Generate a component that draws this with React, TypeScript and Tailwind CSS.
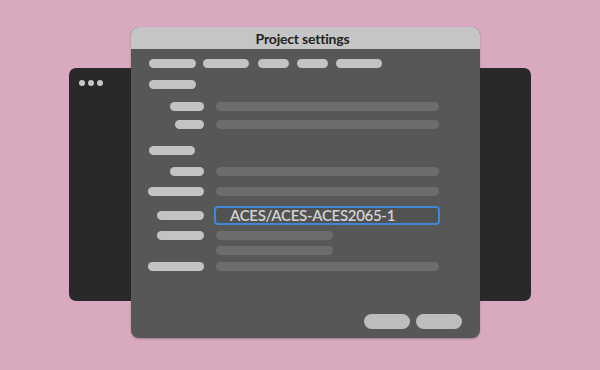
const PILL = "h-[9px] rounded-full bg-[#c3c3c3]";
const BAR = "h-[9px] rounded-full bg-[#6c6c6c]";

function Row({
  label,
  labelW,
  bar,
  className = "",
}: {
  label: number;
  labelW?: "right" | "left";
  bar?: number;
  className?: string;
}) {
  return (
    <div className={`flex items-center ${className}`}>
      <div className={`flex w-[56px] ${labelW === "left" ? "justify-start" : "justify-end"}`}>
        <div className={PILL} style={{ width: label }} />
      </div>
      {bar ? <div className={`${BAR} ml-[12px]`} style={{ width: bar }} /> : null}
    </div>
  );
}

export default function App() {
  return (
    <div
      className="relative w-[600px] h-[370px] bg-[#d8a9bf] pl-[69px] pt-[68px]"
      style={{ fontFamily: "Lato, 'Open Sans', sans-serif" }}
    >
      {/* fenêtre arrière */}
      <div className="w-[462px] h-[233px] rounded-[7px] bg-[#292929] px-[10px] py-[12px]">
        <div className="flex gap-[3px]">
          <span className="w-[6px] h-[6px] rounded-full bg-[#c8c8c8]" />
          <span className="w-[6px] h-[6px] rounded-full bg-[#c8c8c8]" />
          <span className="w-[6px] h-[6px] rounded-full bg-[#c8c8c8]" />
        </div>
      </div>

      {/* fenêtre Project settings */}
      <div className="absolute left-[131px] top-[27px] w-[349px] h-[311px] rounded-[8px] overflow-hidden bg-[#575757] flex flex-col shadow-[0_1px_2px_rgba(0,0,0,0.25)]">
        <div className="h-[22px] bg-[#c5c5c5] flex items-center justify-center pr-[6px] text-[14px] font-bold text-[#222] tracking-[-0.2px]">
          Project settings
        </div>

        <div className="flex flex-col pl-[17px] pt-[10px]">
          <div className="flex gap-[8px]">
            <div className={`${PILL} w-[47px] ml-[1px]`} />
            <div className={`${PILL} w-[46px] -ml-[1px]`} />
            <div className={`${PILL} w-[31px] ml-[1px]`} />
            <div className={`${PILL} w-[31px]`} />
            <div className={`${PILL} w-[46px]`} />
          </div>

          <Row label={47} labelW="left" className="mt-[12px] ml-[1px]" />
          <Row label={34} bar={223} className="mt-[13px]" />
          <Row label={29} bar={223} className="mt-[9px]" />
          <Row label={46} labelW="left" className="mt-[17px] ml-[1px]" />
          <Row label={34} bar={223} className="mt-[12px]" />
          <Row label={56} bar={223} className="mt-[11px]" />

          <div className="flex items-center mt-[10px]">
            <div className="flex w-[56px] justify-end">
              <div className={`${PILL} w-[47px]`} />
            </div>
            <div className="ml-[10px] w-[226px] h-[19px] rounded-[4px] border-2 border-[#3f88d6] bg-[#525252] flex items-center pl-[14px] text-[15px] font-semibold leading-none tracking-[-0.3px] text-[#d2d2d2]">
              ACES/ACES-ACES2065-1
            </div>
          </div>

          <Row label={47} bar={117} className="mt-[6px]" />
          <div className="flex mt-[6px]">
            <div className={`${BAR} w-[117px] ml-[68px]`} />
          </div>
          <Row label={56} bar={223} className="mt-[7px]" />
        </div>

        <div className="mt-auto flex justify-end gap-[6px] pr-[18px] pb-[9px]">
          <div className="w-[46px] h-[15px] rounded-full bg-[#bdbdbd]" />
          <div className="w-[46px] h-[15px] rounded-full bg-[#bdbdbd]" />
        </div>
      </div>
    </div>
  );
}
